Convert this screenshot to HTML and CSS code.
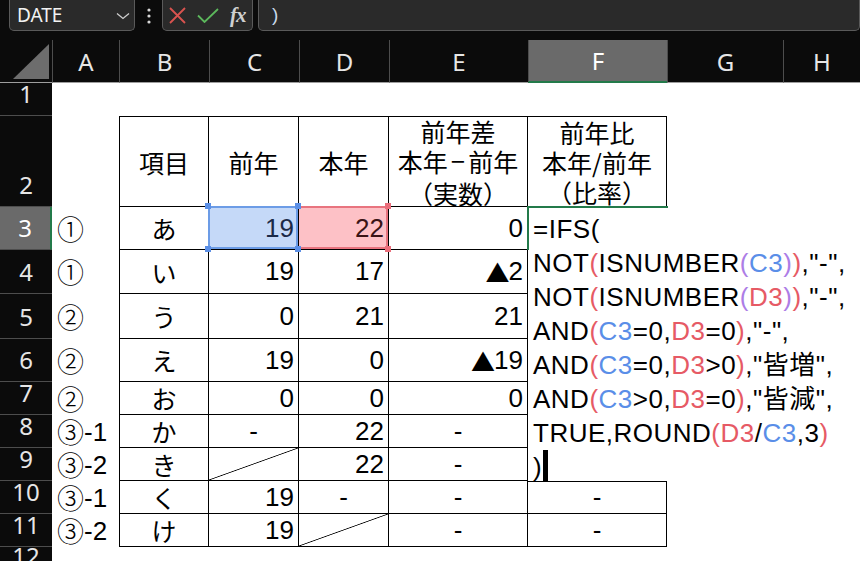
FILE: index.html
```html
<!DOCTYPE html>
<html lang="ja">
<head>
<meta charset="utf-8">
<title>Sheet</title>
<link rel="stylesheet" href="styles.css">
</head>
<body>
<div class="fbar">
  <div class="namebox"><span>DATE</span>
    <svg class="chev" width="14" height="8" viewBox="0 0 14 8"><path d="M1 1.5 L7 6.5 L13 1.5" fill="none" stroke="#cfcfcf" stroke-width="1.3"/></svg>
  </div>
  <div class="dots"><svg width="4" height="16" viewBox="0 0 4 16"><circle cx="2" cy="2" r="1.6" fill="#d8d8d8"/><circle cx="2" cy="8" r="1.6" fill="#d8d8d8"/><circle cx="2" cy="14" r="1.6" fill="#d8d8d8"/></svg></div>
  <div class="btns">
    <svg class="ix" width="17" height="17" viewBox="0 0 17 17"><path d="M1 1 L16 16 M16 1 L1 16" stroke="#d9534f" stroke-width="1.8" fill="none"/></svg>
    <svg class="iv" width="22" height="15" viewBox="0 0 22 15"><path d="M1 7.5 L7.5 14 L21 1" stroke="#5cb85c" stroke-width="1.8" fill="none"/></svg>
    <span class="fx">fx</span>
  </div>
  <div class="finput">)</div>
</div>

<div class="sheet">
  <div class="corner"><svg width="52" height="43" viewBox="0 0 52 43"><polygon points="13,39 49,4 49,39" fill="#6d6d6d"/></svg></div>
  <div class="ch">A</div><div class="ch">B</div><div class="ch">C</div><div class="ch">D</div><div class="ch">E</div><div class="ch chsel">F</div><div class="ch">G</div><div class="ch">H</div>

  <div class="rh">1</div>

  <div class="rh">2</div>
  <div></div>
  <div class="c t l m jp">項目</div>
  <div class="c t m jp">前年</div>
  <div class="c t m jp">本年</div>
  <div class="c t m jp hd"><div>前年差<br>本年<span class="dash">−</span>前年<br>（実数）</div></div>
  <div class="c t m jp hd"><div>前年比<br>本年/前年<br>（比率）</div></div>

  <div class="rh rhsel">3</div>
  <div class="a"><span class="cj">①</span></div>
  <div class="c l m jp">あ</div>
  <div class="c n selc"><span class="h tl"></span><span class="h tr"></span><span class="h bl"></span><span class="h br"></span>19</div>
  <div class="c n seld"><span class="h tr"></span><span class="h br"></span>22</div>
  <div class="c n">0</div>

  <div class="rh">4</div>
  <div class="a"><span class="cj">①</span></div>
  <div class="c l m jp">い</div>
  <div class="c n">19</div>
  <div class="c n">17</div>
  <div class="c n"><span class="tri">▲</span>2</div>

  <div class="rh">5</div>
  <div class="a"><span class="cj">②</span></div>
  <div class="c l m jp">う</div>
  <div class="c n">0</div>
  <div class="c n">21</div>
  <div class="c n">21</div>

  <div class="rh">6</div>
  <div class="a"><span class="cj">②</span></div>
  <div class="c l m jp">え</div>
  <div class="c n">19</div>
  <div class="c n">0</div>
  <div class="c n"><span class="tri">▲</span>19</div>

  <div class="rh">7</div>
  <div class="a"><span class="cj">②</span></div>
  <div class="c l m jp">お</div>
  <div class="c n">0</div>
  <div class="c n">0</div>
  <div class="c n">0</div>

  <div class="rh">8</div>
  <div class="a"><span class="cj">③</span>-1</div>
  <div class="c l m jp">か</div>
  <div class="c m">-</div>
  <div class="c n">22</div>
  <div class="c m">-</div>

  <div class="rh">9</div>
  <div class="a"><span class="cj">③</span>-2</div>
  <div class="c l m jp">き</div>
  <div class="c diag"></div>
  <div class="c n">22</div>
  <div class="c m">-</div>

  <div class="rh">10</div>
  <div class="a"><span class="cj">③</span>-1</div>
  <div class="c l m jp">く</div>
  <div class="c n">19</div>
  <div class="c m">-</div>
  <div class="c m">-</div>
  <div class="c t m">-</div>

  <div class="rh">11</div>
  <div class="a"><span class="cj">③</span>-2</div>
  <div class="c l m jp">け</div>
  <div class="c n">19</div>
  <div class="c diag"></div>
  <div class="c m">-</div>
  <div class="c m">-</div>

  <div class="rh last">12</div>
</div>

<div class="editor"><div>=IFS(</div><div>NOT<span class="r">(</span>ISNUMBER<span class="p">(</span><span class="b">C3</span><span class="p">)</span><span class="r">)</span>,"-",</div><div>NOT<span class="r">(</span>ISNUMBER<span class="p">(</span><span class="r">D3</span><span class="p">)</span><span class="r">)</span>,"-",</div><div>AND<span class="r">(</span><span class="b">C3</span>=0,<span class="r">D3</span>=0<span class="r">)</span>,"-",</div><div>AND<span class="r">(</span><span class="b">C3</span>=0,<span class="r">D3</span>&gt;0<span class="r">)</span>,"皆増",</div><div>AND<span class="r">(</span><span class="b">C3</span>&gt;0,<span class="r">D3</span>=0<span class="r">)</span>,"皆減",</div><div>TRUE,ROUND<span class="r">(</span><span class="r">D3</span>/<span class="b">C3</span>,3<span class="r">)</span></div><div>)<span class="caret"></span></div></div>
<div class="active"></div>
</body>
</html>
```

FILE: styles.css
```css
html, body {
  margin: 0;
  padding: 0;
}
body {
  width: 860px;
  height: 561px;
  overflow: hidden;
  position: relative;
  background: #0b0b0b;
  font-family: "Liberation Sans", "Noto Sans CJK JP", sans-serif;
}

/* formula bar */
.fbar {
  display: flex;
  align-items: flex-start;
  height: 40px;
}
.namebox,
.btns,
.finput {
  box-sizing: border-box;
  height: 31px;
  background: #2a2a2a;
  border: 1px solid #5a5a5a;
  border-top: none;
  border-radius: 0 0 5px 5px;
}
.namebox {
  margin-left: 9px;
  width: 126px;
  display: flex;
  align-items: center;
  justify-content: space-between;
  padding: 0 4px 0 7px;
  color: #f2f2f2;
  font: 19px "Noto Sans", sans-serif;
}
.chev {
  margin-top: 2px;
}
.dots {
  width: 27px;
  height: 31px;
  display: flex;
  align-items: center;
  justify-content: center;
}
.btns {
  width: 91px;
  display: flex;
  align-items: center;
  padding-left: 6px;
}
.ix {
  margin-top: 1px;
}
.iv {
  margin-left: 11px;
  margin-top: 1px;
}
.fx {
  margin-left: 11px;
  font: italic bold 21px "Liberation Serif", serif;
  color: #cfcfcf;
  letter-spacing: -1px;
}
.finput {
  margin-left: 5px;
  flex: 1;
  padding-left: 13px;
  color: #c9d9ea;
  font: 19px/29px "Liberation Sans", sans-serif;
}

/* sheet grid */
.sheet {
  display: grid;
  grid-template-columns: 52px 67px 90px 90px 90px 139px 139px 116px 77px;
  grid-template-rows: 43px 33px 91px 43px 44px 45px 43px 33px 33px 33px 33px 33px 14px;
  background: #ffffff;
}
.corner {
  background: #0b0b0b;
  border-bottom: 1px solid #9e9e9e;
  box-sizing: border-box;
}
.corner svg {
  display: block;
}
.ch {
  background: #0b0b0b;
  color: #e6e6e6;
  border-left: 1px solid #4d4d4d;
  border-bottom: 1px solid #9e9e9e;
  box-sizing: border-box;
  display: flex;
  align-items: center;
  justify-content: center;
  font: 24px "Noto Sans", sans-serif;
}
.chsel {
  background: #6a6a6a;
  color: #ffffff;
  border-bottom: 2px solid #237a4a;
}
.rh {
  grid-column: 1;
  background: #0b0b0b;
  color: #e6e6e6;
  border-bottom: 1px solid #4d4d4d;
  box-sizing: border-box;
  display: flex;
  align-items: flex-end;
  justify-content: center;
  padding-bottom: 1px;
  font: 24px/40px "Noto Sans", sans-serif;
}
.rhsel {
  background: #6a6a6a;
  color: #ffffff;
  border-right: 2px solid #237a4a;
}
.rh.last {
  align-items: flex-start;
  padding: 0;
  line-height: 18px;
  border-bottom: none;
}

/* cells */
.a {
  display: flex;
  align-items: center;
  padding-left: 5px;
  font-size: 26px;
  line-height: 30px;
  color: #000;
}
.cj {
  font-family: "Noto Sans CJK JP", sans-serif;
  font-size: 27px;
  font-weight: 300;
}
.c {
  position: relative;
  box-sizing: border-box;
  border-right: 1px solid #000;
  border-bottom: 1px solid #000;
  display: flex;
  align-items: center;
  font-size: 26px;
  color: #000;
}
.t {
  border-top: 1px solid #000;
}
.l {
  border-left: 1px solid #000;
}
.m {
  justify-content: center;
}
.n {
  justify-content: flex-end;
  padding-right: 4px;
}
.jp {
  font-family: "Noto Sans CJK JP", sans-serif;
  font-size: 25px;
}
.hd {
  text-align: center;
  line-height: 30px;
  padding-top: 1px;
}
.dash {
  font-family: "Liberation Sans", sans-serif;
  margin: 0 3px;
  position: relative;
  top: -2px;
}
.tri {
  font-family: "Noto Sans CJK JP", sans-serif;
  font-size: 24px;
  margin-right: -1px;
}
.diag {
  background: linear-gradient(to bottom right, transparent calc(50% - 0.8px), #000 50%, transparent calc(50% + 0.8px));
}

/* selected reference cells */
.selc {
  background: #c5d9f8;
  color: #1b2a48;
  z-index: 2;
}
.selc::before {
  content: "";
  position: absolute;
  top: -1px;
  left: -1px;
  right: 0;
  bottom: 0;
  border: 2px solid #6c9ce6;
}
.seld {
  background: #fdc1c6;
  color: #3a1416;
  z-index: 1;
}
.seld::before {
  content: "";
  position: absolute;
  top: -1px;
  left: 0;
  right: 0;
  bottom: 0;
  border: 2px solid #e8747f;
  border-left: none;
}
.h {
  position: absolute;
  width: 6px;
  height: 6px;
  z-index: 3;
}
.selc .h {
  background: #5b8fe6;
}
.seld .h {
  background: #ea6e7b;
}
.h.tl { left: -4px; top: -4px; }
.h.tr { right: -3px; top: -4px; }
.h.bl { left: -4px; bottom: -3px; }
.h.br { right: -3px; bottom: -3px; }

/* in-cell editor */
.editor {
  position: absolute;
  left: 528px;
  top: 207px;
  width: 332px;
  height: 274px;
  box-sizing: border-box;
  background: #ffffff;
  padding: 5px 0 0 5px;
  font: 26px/34px "Liberation Sans", "Noto Sans CJK JP", sans-serif;
  letter-spacing: 0.5px;
  color: #000;
  white-space: nowrap;
}
.r { color: #e65a65; }
.p { color: #ad7de6; }
.b { color: #5a8ee8; }
.caret {
  display: inline-block;
  width: 5px;
  height: 31px;
  background: #000;
  vertical-align: top;
  margin-left: 1px;
}
.active {
  position: absolute;
  left: 527px;
  top: 206px;
  width: 141px;
  height: 44px;
  box-sizing: border-box;
  border-top: 2px solid #237a4a;
  border-left: 2px solid #237a4a;
}
```
